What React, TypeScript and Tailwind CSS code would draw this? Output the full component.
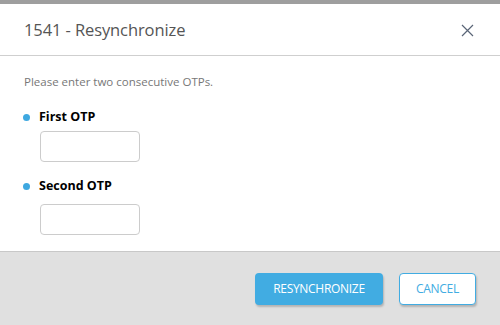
import React, { useState } from 'react';

const font = { fontFamily: '"Open Sans", "Noto Sans", sans-serif' };

const App: React.FC = () => {
  const [first, setFirst] = useState('');
  const [second, setSecond] = useState('');

  return (
    <div className="w-[500px] h-[325px] bg-white flex flex-col overflow-hidden" style={font}>
      {/* Top strip */}
      <div className="h-[4px] bg-[#9e9e9e]" />

      {/* Header */}
      <div className="h-[52px] flex items-center justify-between pl-6 pr-[26px] pt-[1px] border-b border-[#cfcfcf]">
        <h1 className="text-[16.5px] text-[#555] tracking-[-0.1px]">1541 - Resynchronize</h1>
        <button className="text-[#5a6577]">
          <svg width="13" height="13" viewBox="0 0 13 13" fill="none" stroke="currentColor" strokeWidth="1.2">
            <path d="M1 1 L12 12 M12 1 L1 12" />
          </svg>
        </button>
      </div>

      {/* Body */}
      <div className="flex-1 px-6 pt-[17px]">
        <p className="text-[11.5px] text-[#777]">Please enter two consecutive OTPs.</p>

        <div className="mt-[18px]">
          <div className="flex items-center gap-[9px] -ml-[1px]">
            <span className="w-[7px] h-[7px] rounded-full bg-[#3ea8e0]" />
            <label className="text-[12.5px] font-bold text-black">First OTP</label>
          </div>
          <input
            value={first}
            onChange={(e) => setFirst(e.target.value)}
            className="ml-4 mt-[4px] w-[100px] h-[31px] border border-[#cccccc] rounded-[4px] outline-none px-2 text-sm"
          />
        </div>

        <div className="mt-[15px]">
          <div className="flex items-center gap-[9px] -ml-[1px]">
            <span className="w-[7px] h-[7px] rounded-full bg-[#3ea8e0]" />
            <label className="text-[12.5px] font-bold text-black">Second OTP</label>
          </div>
          <input
            value={second}
            onChange={(e) => setSecond(e.target.value)}
            className="ml-4 mt-[8px] w-[100px] h-[31px] border border-[#cccccc] rounded-[4px] outline-none px-2 text-sm"
          />
        </div>
      </div>

      {/* Footer */}
      <div className="h-[74px] bg-[#e0e0e0] border-t border-[#c8c8c8] flex items-center justify-end gap-4 pr-6">
        <button className="w-[128px] h-[32px] bg-[#41ace2] text-white text-[12px] rounded-[4px] shadow-[1px_2px_2px_rgba(0,0,0,0.2)] tracking-[-0.3px]">
          RESYNCHRONIZE
        </button>
        <button className="w-[77px] h-[32px] bg-white text-[#41ace2] text-[12px] rounded-[4px] border border-[#41ace2] shadow-[1px_2px_2px_rgba(0,0,0,0.2)] tracking-[-0.3px]">
          CANCEL
        </button>
      </div>
    </div>
  );
};

export default App;
